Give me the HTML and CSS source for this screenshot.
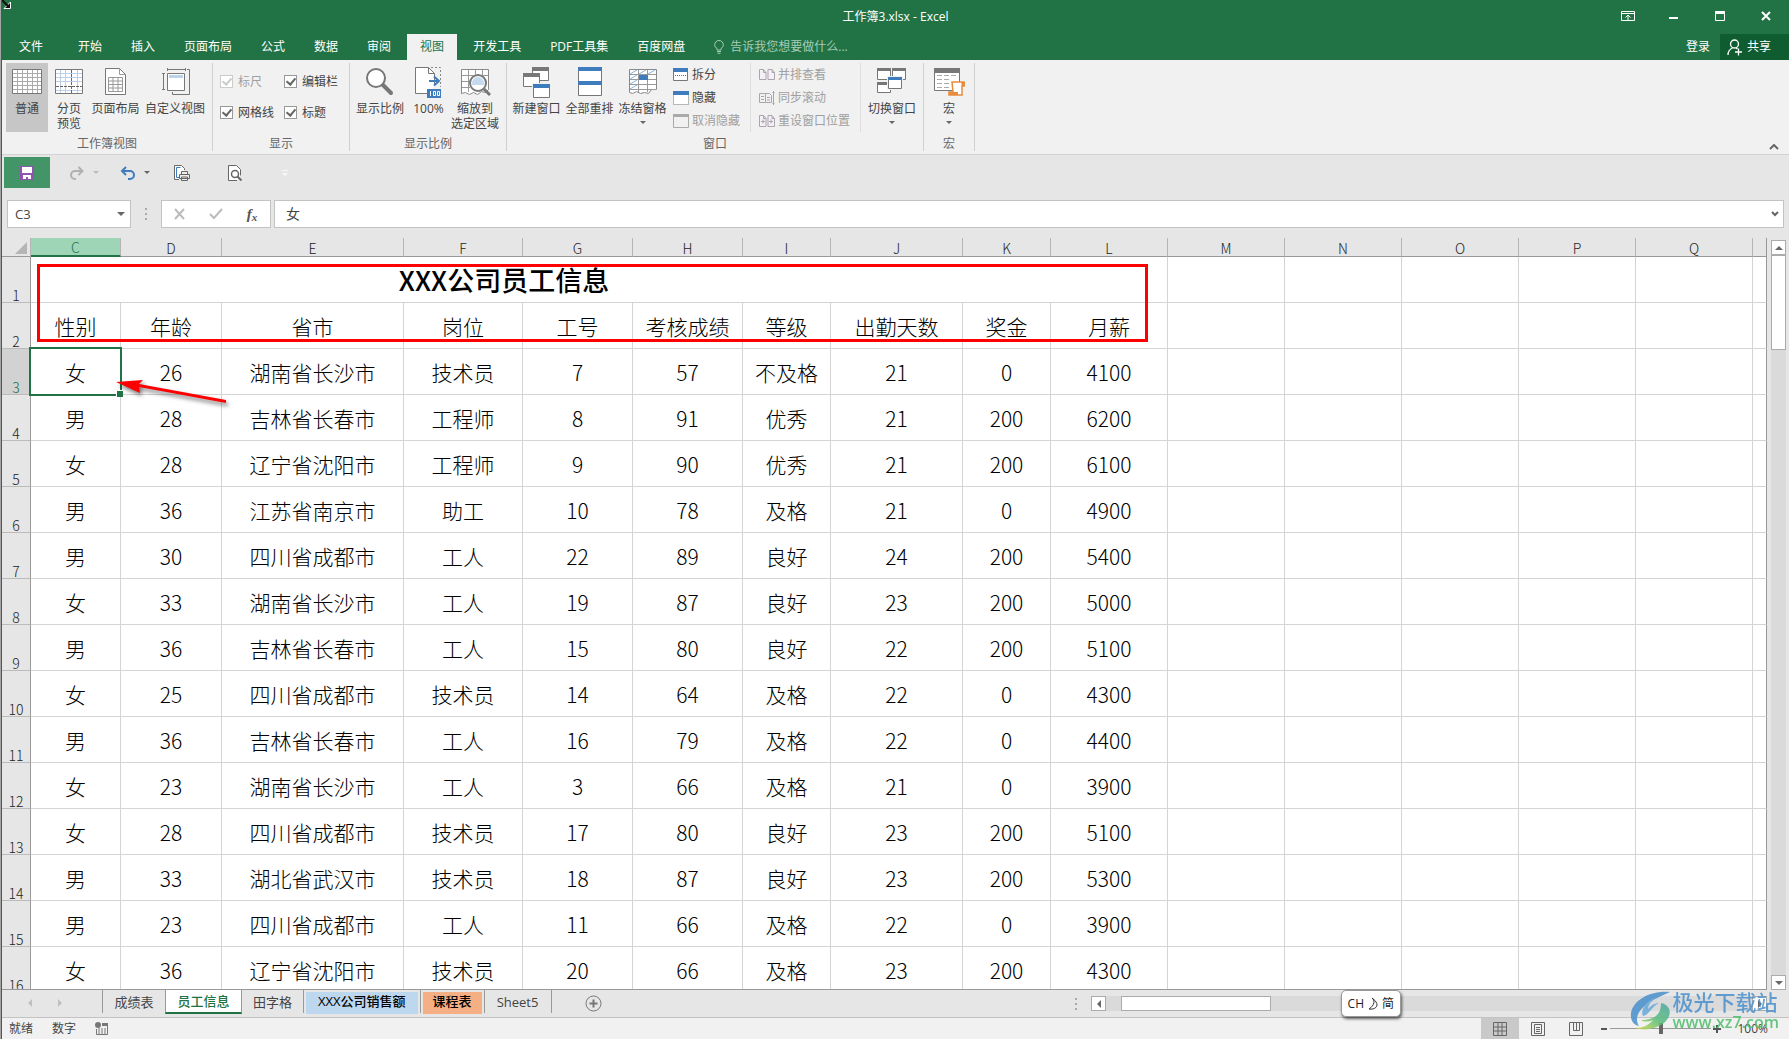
FILE: index.html
```html
<!DOCTYPE html>
<html lang="zh-CN">
<head>
<meta charset="utf-8">
<title>工作簿3.xlsx - Excel</title>
<link rel="stylesheet" href="styles.css">
</head>
<body>
<div class="app">
  <header class="titlebar">
    <svg class="resize-cursor" width="10" height="10" viewBox="0 0 10 10"><path d="M0 0l5 5M8.500 2v6.500H2z" fill="#111" stroke="#fff"/><path d="M0 0l7 7" stroke="#111" stroke-width="2"/></svg>
    <h1 class="title">工作簿3.xlsx - Excel</h1>
    <div class="window-buttons">
      <button aria-label="功能区显示选项"><svg width="14" height="12" viewBox="0 0 14 12" fill="none" stroke="#fff"><path d="M.5 1.500h13v9H.5zM.5 3.500h13"/><path d="M7 10V5M4.500 7.500L7 5l2.500 2.500"/></svg></button>
      <button aria-label="最小化"><svg width="10" height="10" viewBox="0 0 10 10"><path d="M0 6h9v2H0z" fill="#fff"/></svg></button>
      <button aria-label="最大化"><svg width="10" height="10" viewBox="0 0 10 10"><path d="M.5.5h9v9h-9z" fill="none" stroke="#fff"/><path d="M0 0h10v3H0z" fill="#fff"/></svg></button>
      <button aria-label="关闭"><svg width="10" height="10" viewBox="0 0 10 10"><path d="M1 1l8 8M9 1L1 9" stroke="#fff" stroke-width="2"/></svg></button>
    </div>
  </header>

  <nav class="tabs">
    <button class="tab file">文件</button>
    <button class="tab">开始</button>
    <button class="tab">插入</button>
    <button class="tab">页面布局</button>
    <button class="tab">公式</button>
    <button class="tab">数据</button>
    <button class="tab">审阅</button>
    <button class="tab current">视图</button>
    <button class="tab">开发工具</button>
    <button class="tab">PDF工具集</button>
    <button class="tab">百度网盘</button>
    <button class="tell-me"><svg width="10" height="14" viewBox="0 0 10 14" fill="none" stroke="#a6cbb5"><path d="M3 10V8.500C1.500 7.500.7 6.500.7 4.700a4.300 4.200 0 0 1 8.600 0C9.300 6.500 8.500 7.500 7 8.500V10zM3 11.500h4M3.500 13.300h3"/></svg>告诉我您想要做什么...</button>
    <div class="account">
      <a class="sign-in" href="#">登录</a>
      <button class="share"><svg width="16" height="17" viewBox="0 0 16 17" fill="none" stroke="#fff" stroke-width="1.300"><circle cx="7.500" cy="5" r="4"/><path d="M1 16c0-4 2-6 4.500-7M9 9l1.500 1M8 13h7M11.500 9.500v7"/></svg>共享</button>
    </div>
  </nav>

  <section class="ribbon">
    <div class="group views">
      <div class="tools">
        <button class="big w42 pressed"><svg width="32" height="32" viewBox="0 0 32 32"><path d="M1.500 2.500h29v24h-29z" fill="#fff"/><path d="M6.500 3v23M11.500 3v23M16.500 3v23M21.500 3v23M26.500 3v23M2 6.500h28M2 10.500h28M2 14.500h28M2 18.500h28M2 22.500h28" stroke="#aaa"/><path d="M1.500 2.500h29v24h-29z" fill="none" stroke="#777"/></svg><span>普通</span></button>
        <button class="big w42"><svg width="32" height="32" viewBox="0 0 32 32"><path d="M2.500 2.500h27v24h-27z" fill="#fff"/><path d="M7.500 3v23M12.500 3v23M24.500 3v23M3 6.500h26M3 10.500h26M3 14.500h26M3 23.500h26" stroke="#b9d0e8"/><path d="M18.500 3v23M3 19.500h26" stroke="#666" stroke-dasharray="3 1"/><path d="M2.500 2.500h27v24h-27z" fill="none" stroke="#777"/></svg><span>分页<br>预览</span></button>
        <button class="big w51"><svg width="32" height="32" viewBox="0 0 32 32"><path d="M5.500 1.500h14l6 6v20h-20z" fill="#fff" stroke="#777"/><path d="M19.500 1.500v6h6M8.500 10.500h14v14h-14zM8.500 14h14M8.500 17.500h14M8.500 21h14M13 10.500v14M18 10.500v14" fill="none" stroke="#999"/></svg><span>页面布局</span></button>
        <button class="big w68"><svg width="32" height="32" viewBox="0 0 32 32" fill="none" stroke="#777"><path d="M8.500 6.500h17v17h-17z" fill="#fff"/><path d="M10 8h14v3H10z" fill="#bdd3ea" stroke="none"/><path d="M9 2.500h17M8.500 1v3M26.500 1v3M4.500 7v15M3 6.500h3M3 22.500h3M28 2.500h2.500v25h-17V25"/></svg><span>自定义视图</span></button>
      </div>
      <div class="group-name">工作簿视图</div>
    </div>
    <div class="group show">
      <div class="checks">
        <label class="off"><input type="checkbox" checked disabled>标尺</label>
        <label><input type="checkbox" checked>编辑栏</label>
        <label><input type="checkbox" checked>网格线</label>
        <label><input type="checkbox" checked>标题</label>
      </div>
      <div class="group-name">显示</div>
    </div>
    <div class="group zooms">
      <div class="tools">
        <button class="big w56"><svg width="32" height="32" viewBox="0 0 32 32"><path d="M19 18l8 8" stroke="#777" stroke-width="4" stroke-linecap="round"/><circle cx="12" cy="11" r="9" fill="#fff" stroke="#777" stroke-width="2"/></svg><span>显示比例</span></button>
        <button class="big w41"><svg width="32" height="32" viewBox="0 0 32 32"><path d="M15.500 26.500h-13v-26h13l6 6v12" fill="#fff" stroke="#777"/><path d="M15.500.5v6h6" fill="none" stroke="#777"/><path d="M18 .5h9.500V20" fill="none" stroke="#888" stroke-dasharray="2 2"/><path d="M16 14h9M21 9.500l5 4.500-5 4.500" fill="none" stroke="#3f7cbd" stroke-width="2"/><path d="M14 22h14v9H14z" fill="#3f7cbd"/><path d="M17.500 24v5M20.500 24.500h2v4h-2zM24.500 24.500h2v4h-2z" fill="none" stroke="#fff"/></svg><span>100%</span></button>
        <button class="big w52"><svg width="32" height="32" viewBox="0 0 32 32"><path d="M2.500 2.500h27v20l-3 3-4-1-4 3-4-2-4 2-4-2-4 1z" fill="#fff" stroke="#888"/><path d="M9.500 3v22M16.500 3v5M23.500 3v5M3 8.500h26M3 14.500h8M3 20.500h8" stroke="#999"/><circle cx="19" cy="16" r="9" fill="#fff"/><path d="M13 16a6 6 0 0 1 12 0v2H13z" fill="#c5daee"/><path d="M25 22l6 6" stroke="#777" stroke-width="3"/><circle cx="19" cy="16" r="8" fill="none" stroke="#777" stroke-width="2"/></svg><span>缩放到<br>选定区域</span></button>
      </div>
      <div class="group-name">显示比例</div>
    </div>
    <div class="group windows">
      <div class="tools">
        <button class="big w53"><svg width="32" height="32" viewBox="0 0 32 32"><path d="M11.500 1.500h16v12h-16z" fill="#fff" stroke="#777"/><path d="M11 0h17v4H11z" fill="#777"/><path d="M2.500 7.500h16v12h-16z" fill="#fff" stroke="#777"/><path d="M2 6h17v4H2z" fill="#777"/><path d="M11 16h19v16H11z" fill="#f1f1f1"/><path d="M12.500 18.500h16v12h-16z" fill="#fff" stroke="#777"/><path d="M12 17h17v4H12z" fill="#3f7cbd"/></svg><span>新建窗口</span></button>
        <button class="big w53"><svg width="32" height="32" viewBox="0 0 32 32"><path d="M4.500 1.500h23v27h-23z" fill="#fff" stroke="#777"/><path d="M4 0h24v4H4zM4 14h24v4H4z" fill="#3f7cbd"/></svg><span>全部重排</span></button>
        <button class="big w53"><svg width="32" height="32" viewBox="0 0 32 32"><path d="M2.500 2.500h27v20h-5l-3 4-4-1-4 1-4-2-4 2-3-1z" fill="#fff" stroke="#888"/><path d="M3 7.500h26M3 12.500h26M3 17.500h26M3 22.500h26M11.500 3v22M20.500 3v22" stroke="#999"/><path d="M3 7l7-4M12 7l7-4M21 7l7-4M3 12l7-4M3 17l7-4M3 22l7-4" stroke="#8bb3dc"/><path d="M12 8h9v5h-9z" fill="#3f7cbd"/></svg><span>冻结窗格</span><i class="caret"></i></button>
        <div class="list first">
          <button><svg width="16" height="14" viewBox="0 0 16 14"><path d="M.5 1.500h14v11H.5z" fill="#fff" stroke="#777"/><path d="M0 0h15v4H0z" fill="#3f7cbd"/><path d="M2 7.500h12" stroke="#3f7cbd" stroke-dasharray="1 1"/></svg>拆分</button>
          <button><svg width="16" height="14" viewBox="0 0 16 14"><path d="M.5 2.500h15v11H.5z" fill="#fff" stroke="#777" stroke-dasharray="1 1"/><path d="M0 0h16v4H0z" fill="#3f7cbd"/></svg>隐藏</button>
          <button disabled><svg width="16" height="14" viewBox="0 0 16 14"><path d="M.5 1.500h15v12H.5z" fill="#f1f1f1" stroke="#aaa"/><path d="M0 0h16v3H0z" fill="#aaa"/></svg>取消隐藏</button>
        </div>
        <div class="list second">
          <button disabled><svg width="16" height="14" viewBox="0 0 16 14" fill="#f5f0f7" stroke="#aaa4ad"><path d="M.5 1.500h4l2.500 3v7H.5zM9 1.500h4l2.500 3v7H9zM4.500 1.500v3H7M13 1.500v3h2.500"/></svg>并排查看</button>
          <button disabled><svg width="16" height="14" viewBox="0 0 16 14" fill="none" stroke="#aaa4ad"><path d="M6.500 2.500h-6v9h6M6.500 2.500h4l2 2v7h-6zM2 5.500h3M2 8.500h3M8 6.500h3M8 9h3M14.500 0v14M13.500 1.500h2M13.500 12.500h2"/></svg>同步滚动</button>
          <button disabled><svg width="16" height="14" viewBox="0 0 16 14" fill="#f5f0f7" stroke="#aaa4ad"><path d="M.5 1.500h4l2.500 3v8H.5zM9 1.500h4l2.500 3v8H9zM4.500 1.500v3H7M13 1.500v3h2.500M2 7.500h4M4 5.500v4M10 7.500h4M12 5.500v4"/></svg>重设窗口位置</button>
        </div>
        <button class="big w56"><svg width="32" height="32" viewBox="0 0 32 32"><path d="M1.500 2.500h13v10h-13zM16.500 2.500h13v10h-13zM1.500 16.500h13v9h-13z" fill="#fff" stroke="#777"/><path d="M1 1h14v3H1zM16 1h14v3H16zM1 15h14v3H1z" fill="#777"/><path d="M11 9h16v14H11z" fill="#f1f1f1"/><path d="M12.500 10.500h13v11h-13z" fill="#fff" stroke="#777"/><path d="M12 10h14v3H12z" fill="#3f7cbd"/></svg><span>切换窗口</span><i class="caret"></i></button>
      </div>
      <div class="group-name">窗口</div>
    </div>
    <div class="group macros">
      <div class="tools">
        <button class="big w50"><svg width="32" height="32" viewBox="0 0 32 32"><path d="M1.500 2.500h25v21h-25z" fill="#fff" stroke="#777"/><path d="M1 1h26v5H1z" fill="#777"/><path d="M4 8.500h20M4 12.500h14M4 16.500h13M4 20.500h13" stroke="#aaa" stroke-dasharray="5 2"/><path d="M19 15h12v4h-2v9H16v-3h4z" fill="#fff" stroke="#e98b3d" stroke-width="1.500"/><path d="M16 25h9v3h-9zM28 15h4v4h-3z" fill="#e98b3d"/></svg><span>宏</span><i class="caret"></i></button>
      </div>
      <div class="group-name">宏</div>
    </div>
    <button class="collapse" aria-label="折叠功能区"><svg width="10" height="6" viewBox="0 0 10 6"><path d="M1 5l4-4 4 4" fill="none" stroke="#666" stroke-width="2"/></svg></button>
  </section>

  <div class="quick">
    <button class="save" aria-label="保存"><svg width="14" height="14" viewBox="0 0 14 14"><path d="M0 0h14v14H0z" fill="#8e55ac"/><path d="M2 1h10v6H2zM3 9h8v4H8v-2H6v2H3z" fill="#fff"/></svg></button>
    <button class="redo" aria-label="恢复"><svg width="16" height="14" viewBox="0 0 16 14"><path d="M13 5H6a4 4 0 0 0 0 8h1" fill="none" stroke="#b1b1b1" stroke-width="2"/><path d="M9.500 1l4 4-4 4" fill="none" stroke="#b1b1b1" stroke-width="2"/></svg><i class="caret pale"></i></button>
    <button class="undo" aria-label="撤消"><svg width="16" height="14" viewBox="0 0 16 14"><path d="M2 5h8a4 4 0 0 1 0 8H8M6 1L2 5l4 4" fill="none" stroke="#3f7cbd" stroke-width="2"/></svg><i class="caret"></i></button>
    <button class="print" aria-label="快速打印"><svg width="17" height="16" viewBox="0 0 17 16" fill="none" stroke="#666"><path d="M5 14.500H.5V.5h7l3 3V5" fill="#fff"/><path d="M5 12.500H2.500v-10h4" stroke="#3f7cbd"/><path d="M7.500 9.500V6.500h6v3M5.500 9.500h10v4h-10zM7.500 12h6v3.500h-6z" fill="#eee"/></svg></button>
    <button class="preview" aria-label="打印预览"><svg width="15" height="16" viewBox="0 0 15 16" fill="none" stroke="#666"><path d="M9 15.500H.5V.5h8l4 4v6" fill="#fff"/><circle cx="7" cy="9" r="3.500" stroke-width="1.500"/><path d="M9.500 11.500l4 4" stroke-width="2"/></svg></button>
    <button class="more" aria-label="自定义"><svg width="6" height="6" viewBox="0 0 6 6"><path d="M0 0h6v1H0zM0 3h6L3 6z" fill="#f7f7f7"/></svg></button>
  </div>

  <div class="formula">
    <div class="name-box"><input type="text" value="C3" aria-label="名称框"><i class="caret large"></i></div>
    <div class="grip"></div>
    <div class="formula-buttons">
      <button aria-label="取消"><svg width="12" height="12" viewBox="0 0 12 12"><path d="M1 1l9 10M10 1L1 11" stroke="#bbb" stroke-width="2"/></svg></button>
      <button aria-label="输入"><svg width="14" height="12" viewBox="0 0 14 12"><path d="M1 6l4 4 8-9" fill="none" stroke="#bbb" stroke-width="2"/></svg></button>
      <button class="fx" aria-label="插入函数">f<sub>x</sub></button>
    </div>
    <div class="formula-text"><input type="text" value="女" aria-label="编辑栏"><svg width="8" height="6" viewBox="0 0 8 6"><path d="M1 1l3 3 3-3" fill="none" stroke="#666" stroke-width="2"/></svg></div>
  </div>

  <main class="workspace">
    <div class="sheet">
      <table>
        <colgroup><col class="c-num"><col class="c-c"><col class="c-d"><col class="c-e"><col class="c-f"><col class="c-g"><col class="c-g"><col class="c-i"><col class="c-j"><col class="c-i"><col class="c-l"><col class="c-l"><col class="c-l"><col class="c-l"><col class="c-l"><col class="c-l"><col></colgroup>
        <thead>
          <tr><th class="corner"><svg width="12" height="12" viewBox="0 0 12 12"><path d="M12 0v12H0z" fill="#b5b5b5"/></svg></th><th class="sel">C</th><th>D</th><th>E</th><th>F</th><th>G</th><th>H</th><th>I</th><th>J</th><th>K</th><th>L</th><th>M</th><th>N</th><th>O</th><th>P</th><th>Q</th><th></th></tr>
        </thead>
        <tbody>
          <tr><th>1</th><td colspan="10" class="sheet-title">XXX公司员工信息</td><td></td><td></td><td></td><td></td><td></td><td></td></tr>
          <tr><th>2</th><td>性别</td><td>年龄</td><td>省市</td><td>岗位</td><td>工号</td><td>考核成绩</td><td>等级</td><td>出勤天数</td><td>奖金</td><td>月薪</td><td></td><td></td><td></td><td></td><td></td><td></td></tr>
          <tr><th class="sel">3</th><td>女</td><td>26</td><td>湖南省长沙市</td><td>技术员</td><td>7</td><td>57</td><td>不及格</td><td>21</td><td>0</td><td>4100</td><td></td><td></td><td></td><td></td><td></td><td></td></tr>
          <tr><th>4</th><td>男</td><td>28</td><td>吉林省长春市</td><td>工程师</td><td>8</td><td>91</td><td>优秀</td><td>21</td><td>200</td><td>6200</td><td></td><td></td><td></td><td></td><td></td><td></td></tr>
          <tr><th>5</th><td>女</td><td>28</td><td>辽宁省沈阳市</td><td>工程师</td><td>9</td><td>90</td><td>优秀</td><td>21</td><td>200</td><td>6100</td><td></td><td></td><td></td><td></td><td></td><td></td></tr>
          <tr><th>6</th><td>男</td><td>36</td><td>江苏省南京市</td><td>助工</td><td>10</td><td>78</td><td>及格</td><td>21</td><td>0</td><td>4900</td><td></td><td></td><td></td><td></td><td></td><td></td></tr>
          <tr><th>7</th><td>男</td><td>30</td><td>四川省成都市</td><td>工人</td><td>22</td><td>89</td><td>良好</td><td>24</td><td>200</td><td>5400</td><td></td><td></td><td></td><td></td><td></td><td></td></tr>
          <tr><th>8</th><td>女</td><td>33</td><td>湖南省长沙市</td><td>工人</td><td>19</td><td>87</td><td>良好</td><td>23</td><td>200</td><td>5000</td><td></td><td></td><td></td><td></td><td></td><td></td></tr>
          <tr><th>9</th><td>男</td><td>36</td><td>吉林省长春市</td><td>工人</td><td>15</td><td>80</td><td>良好</td><td>22</td><td>200</td><td>5100</td><td></td><td></td><td></td><td></td><td></td><td></td></tr>
          <tr><th>10</th><td>女</td><td>25</td><td>四川省成都市</td><td>技术员</td><td>14</td><td>64</td><td>及格</td><td>22</td><td>0</td><td>4300</td><td></td><td></td><td></td><td></td><td></td><td></td></tr>
          <tr><th>11</th><td>男</td><td>36</td><td>吉林省长春市</td><td>工人</td><td>16</td><td>79</td><td>及格</td><td>22</td><td>0</td><td>4400</td><td></td><td></td><td></td><td></td><td></td><td></td></tr>
          <tr><th>12</th><td>女</td><td>23</td><td>湖南省长沙市</td><td>工人</td><td>3</td><td>66</td><td>及格</td><td>21</td><td>0</td><td>3900</td><td></td><td></td><td></td><td></td><td></td><td></td></tr>
          <tr><th>13</th><td>女</td><td>28</td><td>四川省成都市</td><td>技术员</td><td>17</td><td>80</td><td>良好</td><td>23</td><td>200</td><td>5100</td><td></td><td></td><td></td><td></td><td></td><td></td></tr>
          <tr><th>14</th><td>男</td><td>33</td><td>湖北省武汉市</td><td>技术员</td><td>18</td><td>87</td><td>良好</td><td>23</td><td>200</td><td>5300</td><td></td><td></td><td></td><td></td><td></td><td></td></tr>
          <tr><th>15</th><td>男</td><td>23</td><td>四川省成都市</td><td>工人</td><td>11</td><td>66</td><td>及格</td><td>22</td><td>0</td><td>3900</td><td></td><td></td><td></td><td></td><td></td><td></td></tr>
          <tr><th>16</th><td>女</td><td>36</td><td>辽宁省沈阳市</td><td>技术员</td><td>20</td><td>66</td><td>及格</td><td>23</td><td>200</td><td>4300</td><td></td><td></td><td></td><td></td><td></td><td></td></tr>
        </tbody>
      </table>
      <div class="selection"></div>
      <div class="highlight"></div>
      <svg class="arrow" width="130" height="40" viewBox="0 0 130 40"><path d="M2 9l27-2-4 4 87 16v3L25 14l1 6z" fill="#f00"/></svg>
    </div>
    <div class="vscroll">
      <button aria-label="向上"><i class="tri up"></i></button>
      <div class="vtrack"><div class="vthumb"></div></div>
      <button aria-label="向下"><i class="tri down"></i></button>
    </div>
  </main>

  <div class="sheet-bar">
    <div class="sheet-nav"><i class="tri left pale"></i><i class="tri right pale"></i></div>
    <button class="stab w62">成绩表</button>
    <button class="stab active">员工信息</button>
    <button class="stab w62 line">田字格</button>
    <button class="stab line tinted"><span class="blue">XXX公司销售额</span></button>
    <button class="stab line tinted"><span class="orange">课程表</span></button>
    <button class="stab w67 line">Sheet5</button>
    <button class="add-sheet" aria-label="新工作表"><svg width="17" height="17" viewBox="0 0 17 17" fill="none" stroke="#777"><circle cx="8.500" cy="8.500" r="7.500"/><path d="M8.500 4.500v8M4.500 8.500h8" stroke-width="2"/></svg></button>
    <div class="hscroll">
      <div class="grip"></div>
      <button aria-label="向左"><i class="tri left"></i></button>
      <div class="htrack"><div class="hthumb"></div></div>
      <button aria-label="向右"><i class="tri right"></i></button>
    </div>
  </div>

  <footer class="status">
    <span>就绪</span><span>数字</span>
    <svg width="13" height="13" viewBox="0 0 13 13"><circle cx="3" cy="3" r="3" fill="#777"/><path d="M7 1h6v3H7z" fill="#777"/><path d="M1.500 7v5.500h11V4" fill="none" stroke="#777"/><path d="M3 7h8M3 9h8M3 11h8" stroke="#777" stroke-dasharray="2 1"/></svg>
    <div class="view-buttons">
      <button class="on" aria-label="普通"><svg width="14" height="14" viewBox="0 0 14 14"><path d="M.5.500h13v13H.5zM5 0v14M9 0v14M0 5h14M0 9h14" fill="none" stroke="#666"/></svg></button>
      <button aria-label="页面布局"><svg width="14" height="14" viewBox="0 0 14 14"><path d="M.5.500h13v13H.5zM3.500 2.500h7v9h-7zM5 5.500h4M5 7.500h4M5 9.500h4" fill="none" stroke="#666"/></svg></button>
      <button aria-label="分页预览"><svg width="14" height="14" viewBox="0 0 14 14"><path d="M.5.500h13v13H.5zM4.500 0v8.500h6V0M7.500 0v8" fill="none" stroke="#666"/></svg></button>
    </div>
    <div class="zoom">
      <button aria-label="缩小"><svg width="8" height="8" viewBox="0 0 8 8"><path d="M1 3h6v2H1z" fill="#555"/></svg></button>
      <input type="range" min="0" max="200" value="100" aria-label="显示比例">
      <button aria-label="放大"><svg width="8" height="8" viewBox="0 0 8 8"><path d="M0 3h8v2H0zM3 0h2v8H3z" fill="#555"/></svg></button>
      <span class="percent">100%</span>
    </div>
  </footer>

  <div class="ime"><span>CH</span><svg width="10" height="14" viewBox="0 0 10 14"><path d="M4 1c3 2 3 7-3 11 6 1 10-3 7-7-1-2-3-3-4-4z" fill="none" stroke="#333"/></svg><span>简</span></div>
  <div class="watermark">
    <svg width="44" height="40" viewBox="0 0 44 40">
      <defs><linearGradient id="leaf" x1="0" y1="1" x2="1" y2="0"><stop offset="0" stop-color="#d8dc48"/><stop offset=".5" stop-color="#58bd78"/><stop offset="1" stop-color="#4da5a8"/></linearGradient></defs>
      <path d="M41 1C22-1 4 9 2 22c-1 8 3 12 8 13-5-8 0-16 8-22C25 8 34 4 41 1z" fill="#4a90cc"/>
      <path d="M14 25c-3-6 4-16 14-19-6 4-9 8-9 12 3-4 7-6 11-6-7 3-11 13-16 13z" fill="#65a9dc"/>
      <path d="M32 12c10 2 12 12 3 20C27 38 15 40 6 37c8 0 14-3 18-8-5 2-9 2-12 0 12 0 20-4 20-17z" fill="url(#leaf)"/>
    </svg>
    <div><div class="mark-name">极光下载站</div><div class="mark-url">www.xz7.com</div></div>
  </div>
</div>
</body>
</html>
```
FILE: styles.css
```css
* { box-sizing: border-box; }
body {
  margin: 0;
  background: #a5a5a5;
  font-family: "Open Sans", "Noto Sans CJK SC", sans-serif;
  font-size: 12px;
  line-height: 16px;
  color: #444;
}
button, input { font: inherit; color: inherit; }
button { border: 0; padding: 0; background: none; }
svg { display: block; flex: none; }
.app {
  position: relative;
  display: flex;
  flex-direction: column;
  height: 100vh;
  margin-left: 1px;
  border-left: 1px solid #217346;
  background: #e6e6e6;
  overflow: hidden;
}

/* Title bar */
.titlebar {
  position: relative;
  display: flex;
  height: 34px;
  align-items: center;
  justify-content: center;
  background: #217346;
  color: #fff;
}
.resize-cursor { position: absolute; left: 0; top: 0; }
.title { margin: 0; font-size: 12px; font-weight: 400; }
.window-buttons { position: absolute; right: 0; top: 0; display: flex; }
.window-buttons button { width: 46px; height: 32px; display: grid; place-items: center; }

/* Ribbon tabs */
.tabs {
  display: flex;
  gap: 3px;
  height: 26px;
  padding-left: 4px;
  background: #217346;
  color: #fff;
}
.tab { padding: 0 13px; line-height: 24px; white-space: nowrap; }
.tab.file { margin-right: 6px; }
.tab.current { background: #f1f1f1; color: #217346; }
.tell-me { display: flex; align-items: center; gap: 6px; margin-left: 13px; color: #a6cbb5; }
.account { display: flex; align-items: center; margin-left: auto; }
.sign-in { margin-right: 10px; color: #fff; text-decoration: none; }
.share { display: flex; align-items: center; gap: 4px; width: 69px; height: 26px; padding-left: 7px; background: #0e5c2f; color: #fff; }

/* Ribbon */
.ribbon {
  position: relative;
  display: flex;
  height: 95px;
  padding: 3px 0;
  background: #f1f1f1;
  border-bottom: 1px solid #d2d2d2;
}
.group {
  display: flex;
  flex-direction: column;
  justify-content: space-between;
  height: 88px;
  border-right: 1px solid #d0d0d0;
  white-space: nowrap;
}
.group-name { text-align: center; line-height: 14px; color: #666; }
.tools { display: flex; }
.views { width: 211px; }
.views .tools { padding-left: 4px; }
.show { width: 137px; }
.zooms { width: 157px; }
.zooms .tools { padding-left: 2px; }
.windows { width: 417px; }
.windows .tools { padding-left: 3px; }
.macros { width: 51px; }
.big { display: flex; flex-direction: column; align-items: center; height: 69px; padding-top: 4px; line-height: 15px; }
.big span { margin-top: 2px; }
.big .caret { margin-top: 5px; }
.pressed { background: #c6c6c6; }
.w41 { width: 41px; }
.w42 { width: 42px; }
.w50 { width: 50px; }
.w51 { width: 51px; }
.w52 { width: 52px; }
.w53 { width: 53px; }
.w56 { width: 56px; }
.w68 { width: 68px; }
.caret { width: 0; height: 0; border: 3px solid transparent; border-top-color: #666; border-bottom: 0; }
.caret.pale { border-top-color: #bbb; }
.caret.large { border-width: 4px 4px 0; }
.checks { display: grid; grid-template-columns: 64px 64px; grid-auto-rows: 31px; padding: 3px 0 0 7px; }
.checks label { display: flex; align-items: center; gap: 5px; }
.checks input {
  appearance: none;
  display: grid;
  place-items: center;
  width: 13px;
  height: 13px;
  margin: 0;
  border: 1px solid #999;
  background: #fff;
}
.checks input::after {
  content: "";
  width: 4px;
  height: 7px;
  margin-top: -2px;
  border: solid #666;
  border-width: 0 2px 2px 0;
  transform: rotate(40deg);
}
.checks .off { color: #a0a0a0; }
.checks .off input { border-color: #ccc; }
.checks .off input::after { border-color: #ccc; }
.list { display: flex; flex-direction: column; height: 69px; }
.list button { display: flex; align-items: center; gap: 3px; height: 23px; }
.list button:disabled { color: #a0a0a0; }
.list.first { width: 82px; padding-left: 4px; border-right: 1px solid #dedede; }
.list.second { width: 110px; padding-left: 8px; margin-right: 3px; border-right: 1px solid #dedede; }
.collapse { position: absolute; right: 10px; bottom: 4px; }

/* Quick access */
.quick { display: flex; height: 45px; padding: 2px 2px; }
.quick button { display: flex; align-items: center; justify-content: center; gap: 8px; height: 31px; }
.quick .save { width: 46px; background: #439467; }
.quick .redo { width: 68px; }
.quick .undo { width: 34px; }
.quick .print { width: 60px; }
.quick .preview { width: 46px; }
.quick .more { width: 54px; }

/* Formula bar */
.formula { display: flex; height: 28px; margin: 0 5px 10px; font-size: 13px; }
.formula input { flex: 1; min-width: 0; border: 0; padding: 0; background: none; outline: 0; }
.name-box, .formula-text, .formula-buttons { display: flex; align-items: center; border: 1px solid #c3c3c3; background: #fff; }
.name-box { width: 124px; padding: 0 5px 0 7px; }
.grip { width: 2px; height: 12px; margin: auto 14px; background: repeating-linear-gradient(#aaa 0 2px, transparent 2px 5px); }
.formula-buttons { width: 110px; }
.formula-buttons button { flex: 1; display: grid; place-items: center; }
.formula-buttons .fx { display: block; font: italic 700 15px/20px "Liberation Serif", serif; color: #555; }
.fx sub { font-size: 11px; line-height: 10px; vertical-align: -2px; }
.formula-text { flex: 1; margin-left: 3px; padding: 0 4px 0 11px; font-size: 14px; }

/* Grid */
.workspace { display: flex; flex: 1; min-height: 0; }
.sheet { position: relative; flex: 1; min-width: 0; overflow: hidden; border-bottom: 1px solid #999; }
table { width: 100%; table-layout: fixed; border-collapse: separate; border-spacing: 0; font-family: "Noto Sans CJK SC", sans-serif; color: #000; }
.c-num { width: 29px; }
.c-c { width: 90px; }
.c-d { width: 101px; }
.c-e { width: 182px; }
.c-f { width: 119px; }
.c-g { width: 110px; }
.c-i { width: 88px; }
.c-j { width: 132px; }
.c-l { width: 117px; }
th { padding: 0; font-size: 14px; font-weight: 300; color: #222; }
thead th { height: 19px; padding-top: 2px; line-height: 16px; border-right: 1px solid #b5b5b5; border-bottom: 1px solid #999; }
thead th.sel { background: #9fd5b7; color: #217346; border-bottom: 2px solid #217346; line-height: 15px; }
.corner svg { margin: 0 0 0 13px; }
tbody th { height: 46px; line-height: 14px; vertical-align: bottom; border-right: 1px solid #999; border-bottom: 1px solid #bbb; }
tbody th.sel { background: #d2d2d2; color: #217346; }
td { height: 46px; padding: 0; background: #fff; border-right: 1px solid #d4d4d4; border-bottom: 1px solid #d4d4d4; text-align: center; font-size: 21px; font-weight: 300; line-height: 24px; white-space: nowrap; }
td:last-child, thead th:last-child { border-right-color: #999; }
.sheet-title { padding-right: 190px; font-size: 27px; font-weight: 500; line-height: 32px; }
.selection { position: absolute; left: 27px; top: 109px; width: 93px; height: 49px; border: 2px solid #217346; }
.selection::after { content: ""; position: absolute; right: -3px; bottom: -3px; width: 6px; height: 6px; background: #217346; border: solid #fff; border-width: 1px 0 0 1px; }
.highlight { position: absolute; left: 35px; top: 26px; width: 1111px; height: 78px; border: 3px solid #f00; }
.arrow { position: absolute; left: 112px; top: 135px; filter: drop-shadow(2px 3px 2px #0008); }
.vscroll { display: flex; flex-direction: column; width: 22px; padding: 2px 3px 0 4px; }
.vscroll button, .hscroll button { display: grid; place-items: center; width: 15px; height: 15px; border: 1px solid #ababab; background: #fff; }
.vtrack { flex: 1; background: #dadada; }
.vthumb { height: 95px; border: 1px solid #ababab; background: #fff; }
.tri { width: 0; height: 0; border: 4px solid transparent; }
.tri.up { border-top: 0; border-bottom-color: #666; }
.tri.down { border-bottom: 0; border-top-color: #666; }
.tri.left { border-left: 0; border-right-color: #666; }
.tri.right { border-right: 0; border-left-color: #666; }
.tri.left.pale { border-right-color: #c0c0c0; }
.tri.right.pale { border-left-color: #c0c0c0; }

/* Sheet tabs */
.sheet-bar { display: flex; height: 27px; font-size: 13px; }
.sheet-nav { display: flex; gap: 26px; width: 101px; height: 23px; padding: 9px 0 0 26px; border-right: 1px solid #999; }
.stab { height: 23px; line-height: 22px; white-space: nowrap; }
.stab.line { border-right: 1px solid #999; }
.stab.active { width: 77px; height: 25px; margin-top: -1px; background: #fff; color: #217346; border: 1px solid #999; border-width: 0 1px; border-bottom: 2px solid #217346; font-weight: 500; }
.stab.tinted { padding: 0 2px; color: #000; font-weight: 500; }
.stab span { display: block; height: 22px; margin-top: 2px; line-height: 19px; }
.blue { padding: 0 12px; background: #bdd7ee; }
.orange { padding: 0 10px; background: #f4b084; }
.w62 { width: 62px; }
.w67 { width: 67px; }
.add-sheet { display: grid; place-items: center; width: 84px; height: 27px; }
.hscroll { display: flex; align-items: center; flex: none; width: 40%; height: 27px; margin: 0 13px 0 auto; padding-right: 9px; }
.htrack { flex: 1; height: 15px; padding-left: 15px; background: #dadada; }
.hthumb { width: 150px; height: 15px; border: 1px solid #ababab; background: #fff; }

/* Status bar */
.status { display: flex; align-items: center; gap: 19px; height: 22px; padding-left: 7px; background: #f1f1f1; border-top: 1px solid #c3c3c3; }
.view-buttons { display: flex; margin-left: auto; }
.view-buttons button { display: grid; place-items: center; width: 38px; height: 21px; }
.view-buttons .on { background: #c9c9c9; }
.zoom { display: flex; align-items: center; gap: 2px; margin: 0 21px 0 -14px; }
.zoom input { appearance: none; width: 101px; height: 12px; margin: 0; background: linear-gradient(#999, #999) center / 100% 1px no-repeat; }
.zoom input::-webkit-slider-thumb { appearance: none; width: 4px; height: 11px; background: #666; }
.percent { margin-left: 14px; }

/* Floating overlays */
.ime {
  position: absolute;
  right: 388px;
  bottom: 22px;
  display: flex;
  align-items: center;
  gap: 4px;
  height: 27px;
  padding: 0 6px;
  border: 1px solid #999;
  border-radius: 5px;
  background: #fff;
  box-shadow: 1px 2px 3px #0009;
  color: #222;
}
.watermark { position: absolute; right: 10px; bottom: 8px; display: flex; align-items: center; opacity: 0.85; }
.mark-name { font-size: 21px; line-height: 24px; font-weight: 500; color: #4a90cc; }
.mark-url { font-size: 16px; line-height: 17px; color: #4dbd6b; font-weight: 600; }
```
